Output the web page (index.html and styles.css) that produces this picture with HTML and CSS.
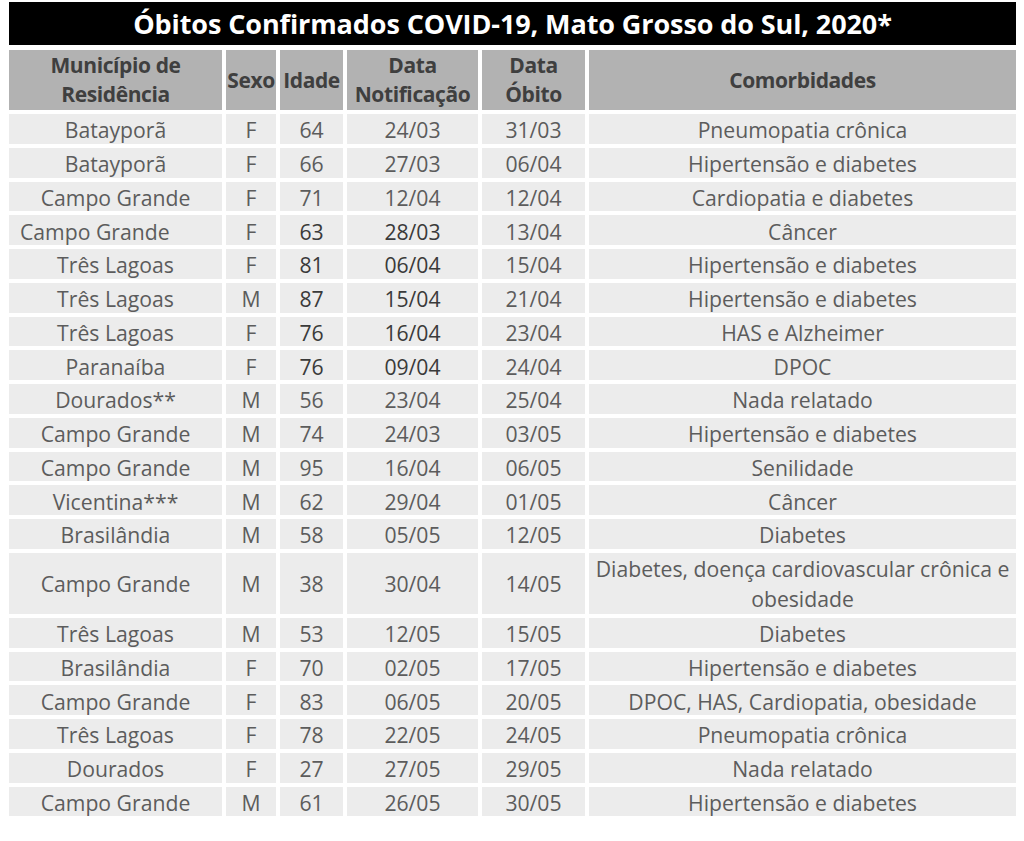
FILE: index.html
```html
<!DOCTYPE html>
<html lang="pt-BR">
<head>
<meta charset="utf-8">
<title>Óbitos Confirmados COVID-19</title>
<link rel="stylesheet" href="styles.css">
</head>
<body>
<div class="sheet">
  <div class="title">Óbitos Confirmados COVID-19, Mato Grosso do Sul, 2020*</div>
  <table class="grid">
    <colgroup>
      <col class="c-mun"><col class="c-sex"><col class="c-age"><col class="c-not"><col class="c-obt"><col class="c-com">
    </colgroup>
    <thead>
      <tr>
        <th>Município de<br>Residência</th>
        <th>Sexo</th>
        <th>Idade</th>
        <th>Data<br>Notificação</th>
        <th>Data<br>Óbito</th>
        <th>Comorbidades</th>
      </tr>
    </thead>
    <tbody>
      <tr><td>Batayporã</td><td>F</td><td>64</td><td>24/03</td><td>31/03</td><td>Pneumopatia crônica</td></tr>
      <tr><td>Batayporã</td><td>F</td><td>66</td><td>27/03</td><td>06/04</td><td>Hipertensão e diabetes</td></tr>
      <tr><td>Campo Grande</td><td>F</td><td>71</td><td>12/04</td><td>12/04</td><td>Cardiopatia e diabetes</td></tr>
      <tr><td class="left">Campo Grande</td><td>F</td><td class="dk">63</td><td class="dk">28/03</td><td>13/04</td><td>Câncer</td></tr>
      <tr><td>Três Lagoas</td><td>F</td><td class="dk">81</td><td class="dk">06/04</td><td>15/04</td><td>Hipertensão e diabetes</td></tr>
      <tr><td>Três Lagoas</td><td>M</td><td class="dk">87</td><td class="dk">15/04</td><td>21/04</td><td>Hipertensão e diabetes</td></tr>
      <tr><td>Três Lagoas</td><td>F</td><td class="dk">76</td><td class="dk">16/04</td><td>23/04</td><td>HAS e Alzheimer</td></tr>
      <tr><td>Paranaíba</td><td>F</td><td class="dk">76</td><td class="dk">09/04</td><td>24/04</td><td>DPOC</td></tr>
      <tr><td>Dourados**</td><td>M</td><td>56</td><td>23/04</td><td>25/04</td><td>Nada relatado</td></tr>
      <tr><td>Campo Grande</td><td>M</td><td>74</td><td>24/03</td><td>03/05</td><td>Hipertensão e diabetes</td></tr>
      <tr><td>Campo Grande</td><td>M</td><td>95</td><td>16/04</td><td>06/05</td><td>Senilidade</td></tr>
      <tr><td>Vicentina***</td><td>M</td><td>62</td><td>29/04</td><td>01/05</td><td>Câncer</td></tr>
      <tr><td>Brasilândia</td><td>M</td><td>58</td><td>05/05</td><td>12/05</td><td>Diabetes</td></tr>
      <tr class="tall"><td>Campo Grande</td><td>M</td><td>38</td><td>30/04</td><td>14/05</td><td>Diabetes, doença cardiovascular crônica e obesidade</td></tr>
      <tr><td>Três Lagoas</td><td>M</td><td>53</td><td>12/05</td><td>15/05</td><td>Diabetes</td></tr>
      <tr><td>Brasilândia</td><td>F</td><td>70</td><td>02/05</td><td>17/05</td><td>Hipertensão e diabetes</td></tr>
      <tr><td>Campo Grande</td><td>F</td><td>83</td><td>06/05</td><td>20/05</td><td>DPOC, HAS, Cardiopatia, obesidade</td></tr>
      <tr><td>Três Lagoas</td><td>F</td><td>78</td><td>22/05</td><td>24/05</td><td>Pneumopatia crônica</td></tr>
      <tr><td>Dourados</td><td>F</td><td>27</td><td>27/05</td><td>29/05</td><td>Nada relatado</td></tr>
      <tr><td>Campo Grande</td><td>M</td><td>61</td><td>26/05</td><td>30/05</td><td>Hipertensão e diabetes</td></tr>
    </tbody>
  </table>
</div>
</body>
</html>
```
FILE: styles.css
```css
html, body {
  margin: 0;
  padding: 0;
  background: #ffffff;
}

.sheet {
  padding-top: 2px;
  font-family: "Open Sans", "Noto Sans", "DejaVu Sans", sans-serif;
}

.title {
  margin-left: 9px;
  width: 1007px;
  height: 43px;
  background: #000000;
  color: #ffffff;
  font-weight: 700;
  font-size: 27px;
  line-height: 43px;
  text-align: center;
  letter-spacing: -0.1px;
}

.grid {
  margin: 1px 0 0 5px;
  border-collapse: separate;
  border-spacing: 4px;
  table-layout: fixed;
  width: 1015px;
}

.c-mun { width: 213px; }
.c-sex { width: 50px; }
.c-age { width: 63px; }
.c-not { width: 131px; }
.c-obt { width: 103px; }
.c-com { width: 427px; }

.grid th,
.grid td {
  padding: 0;
  text-align: center;
  vertical-align: middle;
  white-space: nowrap;
}

.grid th {
  height: 60px;
  background: #b2b2b2;
  color: #3f3f3f;
  font-weight: 700;
  font-size: 21px;
  line-height: 29px;
  letter-spacing: -0.4px;
}

.grid td {
  height: 26.75px;
  background: #ececec;
  color: #5c5c5c;
  font-size: 21.2px;
  line-height: 26px;
  padding-top: 3px;
}

.grid tr.tall td {
  height: 60px;
  white-space: normal;
  line-height: 30px;
  padding-top: 1px;
}

.grid td.left {
  text-align: left;
  padding-left: 11px;
}

.grid td.dk {
  color: #3a3a3a;
}
```
